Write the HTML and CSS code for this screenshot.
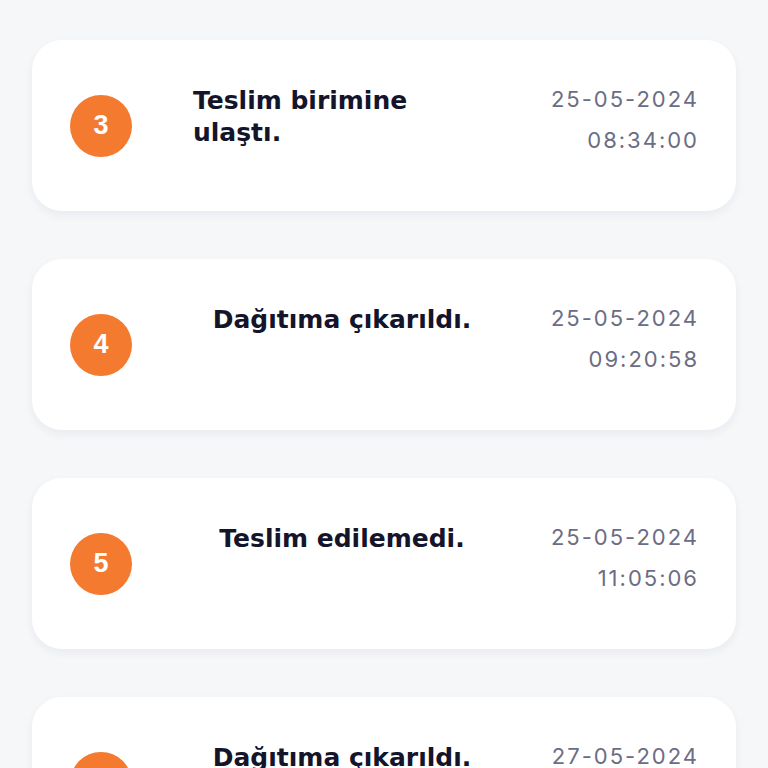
FILE: index.html
```html
<!DOCTYPE html>
<html lang="tr">
<head>
<meta charset="utf-8">
<link rel="stylesheet" href="styles.css">
</head>
<body>
<div class="list">
  <div class="card">
    <div class="step">3</div>
    <div class="title-area"><div class="title">Teslim birimine ulaştı.</div></div>
    <div class="when"><div>25-05-2024</div><div>08:34:00</div></div>
  </div>
  <div class="card">
    <div class="step">4</div>
    <div class="title-area"><div class="title">Dağıtıma çıkarıldı.</div></div>
    <div class="when"><div>25-05-2024</div><div>09:20:58</div></div>
  </div>
  <div class="card">
    <div class="step">5</div>
    <div class="title-area"><div class="title">Teslim edilemedi.</div></div>
    <div class="when"><div>25-05-2024</div><div>11:05:06</div></div>
  </div>
  <div class="card">
    <div class="step">6</div>
    <div class="title-area"><div class="title">Dağıtıma çıkarıldı.</div></div>
    <div class="when"><div>27-05-2024</div><div>08:10:12</div></div>
  </div>
</div>
</body>
</html>
```
FILE: styles.css
```css
html, body {
  margin: 0;
  padding: 0;
  background: #f6f7f9;
  overflow: hidden;
}
.list {
  display: flex;
  flex-direction: column;
  gap: 48px;
  padding: 40px 32px 0 32px;
}
.card {
  height: 171px;
  flex-shrink: 0;
  background: #ffffff;
  border-radius: 30px;
  box-shadow: 0 4px 10px rgba(30, 30, 60, 0.06);
  display: flex;
  align-items: flex-start;
  padding: 39px 39px 0 38px;
  box-sizing: border-box;
}
.step {
  align-self: center;
  margin-top: -39px;
  width: 62px;
  height: 62px;
  border-radius: 50%;
  background: #f47a2f;
  color: #ffffff;
  font-family: "Liberation Sans", Arial, sans-serif;
  font-weight: 700;
  font-size: 27px;
  display: flex;
  align-items: center;
  justify-content: center;
  flex-shrink: 0;
}
.title-area {
  width: 298px;
  margin-left: 61px;
  margin-top: 6px;
  display: flex;
  justify-content: center;
}
.title {
  font-family: "DejaVu Sans", "Noto Sans", sans-serif;
  font-weight: 700;
  font-size: 25px;
  line-height: 32px;
  color: #14142a;
}
.when {
  margin-left: auto;
  margin-right: -2px;
  text-align: right;
  font-family: Inter, "Noto Sans", sans-serif;
  font-size: 22px;
  line-height: 41px;
  color: #6c6d84;
  letter-spacing: 2px;
}
```
